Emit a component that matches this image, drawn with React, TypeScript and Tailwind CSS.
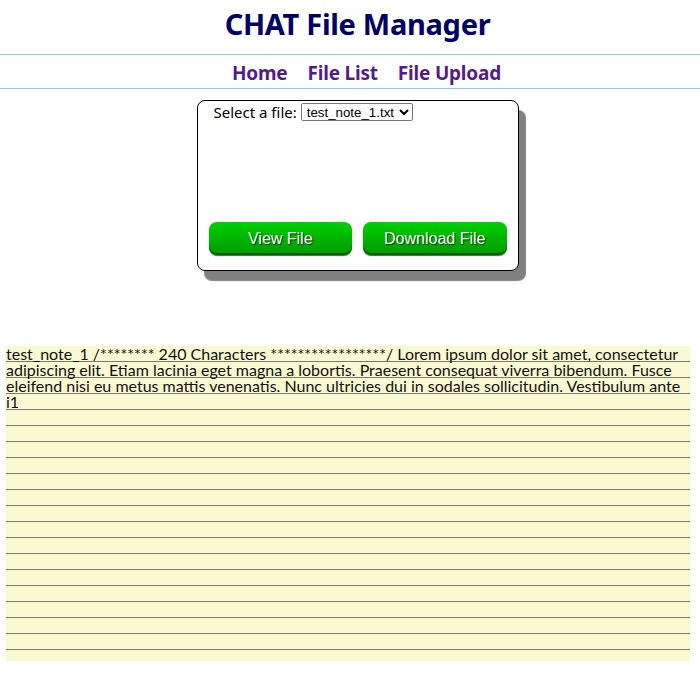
import React, { useState } from 'react';

const NOTE =
  'test_note_1 /******** 240 Characters *****************/ Lorem ipsum dolor sit amet, consectetur adipiscing elit. Etiam lacinia eget magna a lobortis. Praesent consequat viverra bibendum. Fusce eleifend nisi eu metus mattis venenatis. Nunc ultricies dui in sodales sollicitudin. Vestibulum ante i1';

export default function App() {
  const [file, setFile] = useState('test_note_1.txt');

  return (
    <div className="min-h-screen bg-white text-black font-['Noto_Sans',sans-serif]">
      {/* Header */}
      <header className="h-[55px] flex justify-center pl-[15px] pt-[2px] border-b border-[#87ceeb]">
        <h1 className="text-[29px] font-bold text-[#000066] tracking-[-0.3px]">CHAT File Manager</h1>
      </header>
      <nav className="h-[34px] flex items-center justify-center gap-5 pl-[33px] pt-[3px] border-b border-[#87ceeb]">
        <a href="#" className="text-[19px] font-bold text-[#551a8b] tracking-[-0.2px]">Home</a>
        <a href="#" className="text-[19px] font-bold text-[#551a8b] tracking-[-0.2px]">File List</a>
        <a href="#" className="text-[19px] font-bold text-[#551a8b] tracking-[-0.2px]">File Upload</a>
      </nav>

      {/* Card */}
      <div className="flex justify-center pt-[11px] pl-[15px]">
        <div className="w-[322px] h-[171px] border border-black rounded-lg bg-white shadow-[7px_10px_1px_#808080] flex flex-col justify-between px-[11px] pt-0 pb-[15px]">
          <div className="flex items-center gap-1 pl-[5px] text-[15px]">
            <span>Select a file:</span>
            <select
              value={file}
              onChange={(e) => setFile(e.target.value)}
              className="h-[18px] border border-[#767676] rounded-[2px] text-[13.3px] font-['Liberation_Sans',sans-serif] px-[1px] leading-none"
            >
              <option>test_note_1.txt</option>
              <option>test_note_2.txt</option>
            </select>
          </div>
          <div className="flex gap-[11px]">
            <button className="w-[144px] h-[33px] rounded-lg bg-gradient-to-b from-[#00d000] to-[#009a00] shadow-[inset_0_-2px_0_#006600,0_1px_1px_#555] text-white text-[16px] font-['Liberation_Sans',sans-serif] [text-shadow:1px_1px_1px_#003300]">
              View File
            </button>
            <button className="w-[144px] h-[33px] rounded-lg bg-gradient-to-b from-[#00d000] to-[#009a00] shadow-[inset_0_-2px_0_#006600,0_1px_1px_#555] text-white text-[16px] font-['Liberation_Sans',sans-serif] [text-shadow:1px_1px_1px_#003300]">
              Download File
            </button>
          </div>
        </div>
      </div>

      {/* File contents */}
      <div className="px-[6px] pt-[75px]">
        <div className="w-[684px] h-[315px] bg-[#fafad2] bg-[repeating-linear-gradient(to_bottom,transparent_0px,transparent_15px,#78786c_15px,#78786c_16px)] font-['Lato',sans-serif] text-[16px] leading-[16px] text-[#111]">
          {NOTE}
        </div>
      </div>
    </div>
  );
}
